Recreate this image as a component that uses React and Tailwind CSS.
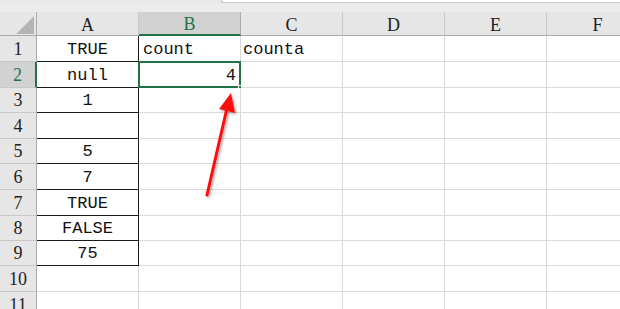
import React from 'react';

const cols = ['A', 'B', 'C', 'D', 'E', 'F'];
const rowHeights = [26, 26, 25, 26, 25, 26, 26, 25, 25, 26, 26];

const data = {
  1: { A: 'TRUE', B: 'count', C: 'counta' },
  2: { A: 'null', B: '4' },
  3: { A: '1' },
  5: { A: '5' },
  6: { A: '7' },
  7: { A: 'TRUE' },
  8: { A: 'FALSE' },
  9: { A: '75' },
};

const mono = { fontFamily: '"Liberation Mono", "DejaVu Sans Mono", monospace' };
const serif = { fontFamily: '"Liberation Serif", "DejaVu Serif", serif' };

function Cell({ row, col }) {
  const value = data[row]?.[col] ?? '';
  const boxed = col === 'A' && row >= 1 && row <= 9;
  const sideBoxed = col === 'A' && row >= 1 && row <= 9;
  const selected = row === 2 && col === 'B';

  let align = 'justify-center';
  if (col === 'B' && row === 1) align = 'justify-start pl-[4px]';
  if (col === 'C') align = 'justify-start pl-[2px]';
  if (selected) align = 'justify-end pr-[4px]';

  return (
    <div
      className={
        'relative flex items-end pb-[1px] bg-white text-[17px] leading-[20px] text-[#111] border-b border-r ' +
        align + ' ' +
        (boxed ? 'border-b-[#1a1a1a] ' : 'border-b-[#d9d9d9] ') +
        (sideBoxed ? 'border-r-[#1a1a1a]' : 'border-r-[#d9d9d9]')
      }
      style={mono}
    >
      {value}
      {selected && (
        <>
          <div className="absolute -left-px -top-px right-[-1px] bottom-[-1px] border-2 border-[#217346]" />
          <div className="absolute right-[-4px] bottom-[-4px] w-[6px] h-[6px] bg-[#217346] border border-white" />
        </>
      )}
    </div>
  );
}

export default function App() {
  return (
    <div className="relative w-[620px] h-[309px] overflow-hidden bg-[#ebebeb]">
      <div className="flex h-[3px]">
        <div className="w-[221px] bg-[#e8e8e8]" />
        <div className="flex-1 bg-white border-l border-b border-[#c6c6c6]" />
      </div>
      <div className="h-[9px] bg-[#ececec]" />

      <div
        className="grid"
        style={{
          gridTemplateColumns: '37px repeat(6, 102px)',
          gridTemplateRows: '24px ' + rowHeights.map((h) => h + 'px').join(' '),
        }}
      >
        <div className="relative bg-[#e6e6e6] border-r border-b border-[#ababab]">
          <svg className="absolute left-[16px] top-[4px]" width="18" height="18" viewBox="0 0 18 18">
            <polygon points="18,0 18,18 0,18" fill="#b5b5b5" />
          </svg>
        </div>
        {cols.map((c) => (
          <div
            key={c}
            className={
              'flex items-center justify-center pt-[3px] text-[18px] ' +
              (c === 'B'
                ? 'bg-[#d2d2d2] text-[#217346] border-r border-r-[#ababab] border-b-2 border-b-[#217346]'
                : 'bg-[#e6e6e6] text-[#222] border-r border-b border-r-[#c8c8c8] border-b-[#ababab]')
            }
            style={serif}
          >
            {c}
          </div>
        ))}

        {rowHeights.map((_, i) => {
          const row = i + 1;
          return (
            <React.Fragment key={row}>
              <div
                className={
                  'flex items-center justify-center pt-[1px] text-[18px] border-b border-b-[#c8c8c8] ' +
                  (row === 2
                    ? 'bg-[#d2d2d2] text-[#217346] border-r-2 border-r-[#217346]'
                    : 'bg-[#e6e6e6] text-[#222] border-r border-r-[#ababab]')
                }
                style={serif}
              >
                {row}
              </div>
              {cols.map((c) => (
                <Cell key={c} row={row} col={c} />
              ))}
            </React.Fragment>
          );
        })}
      </div>

      <svg className="absolute left-0 top-0 pointer-events-none" width="620" height="309">
        <defs>
          <filter id="sh" x="-50%" y="-50%" width="200%" height="200%">
            <feDropShadow dx="1.5" dy="1.5" stdDeviation="1.2" floodColor="#000" floodOpacity="0.35" />
          </filter>
        </defs>
        <g filter="url(#sh)">
          <line x1="207" y1="195" x2="227" y2="108" stroke="#ff1010" strokeWidth="3" strokeLinecap="round" />
          <polygon points="231,93 235,113 219,109" fill="#ff1010" />
        </g>
      </svg>
    </div>
  );
}
